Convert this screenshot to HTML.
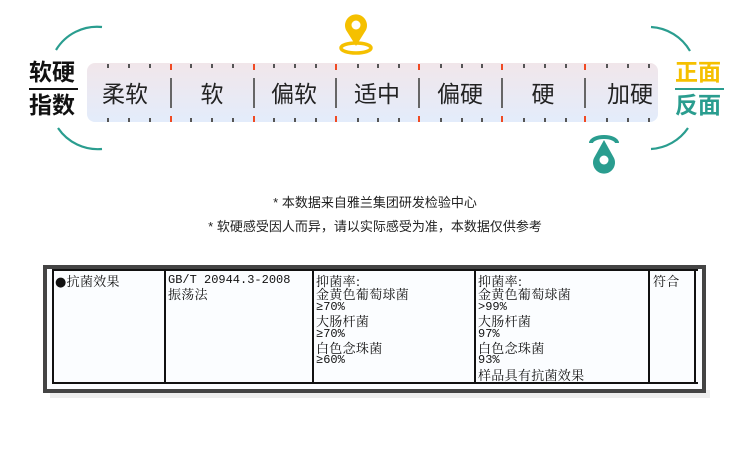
<!DOCTYPE html>
<html><head><meta charset="utf-8"><style>
*{margin:0;padding:0;box-sizing:border-box}
body{width:750px;height:462px;background:#fff;position:relative;overflow:hidden;font-family:"Liberation Sans","Noto Sans CJK SC",sans-serif}
.a{position:absolute}
.bar{left:87px;top:63px;width:571px;height:59px;border-radius:8px;background:linear-gradient(#f1e6ea,#e3ecfb)}
.lab{font-size:23px;color:#222;top:75px;transform:translateX(-50%);white-space:nowrap}
.div{width:2px;height:30px;background:#666;top:78px}
.tk{width:2px;height:4px;background:#555}
.rt{width:2px;height:6px;background:#f04a23}
.t{font-family:"Liberation Mono",monospace;font-size:12px;color:#111;top:274px;white-space:nowrap}
.t div{height:13.4px;line-height:13.4px;overflow:visible}
.t .c{font-family:"Noto Serif CJK SC",serif;font-size:13px;letter-spacing:0.3px}
.vl{width:2px;background:#111;top:269px;height:115px}
</style></head><body>
<svg class="a" style="left:0;top:0" width="750" height="180">
<path d="M56 50 A48 48 0 0 1 102 27" stroke="#2a9d8f" stroke-width="2.2" fill="none"/>
<path d="M58 128 A48 48 0 0 0 102 149" stroke="#2a9d8f" stroke-width="2.2" fill="none"/>
<path d="M651 27 A48 48 0 0 1 690 51" stroke="#2a9d8f" stroke-width="2.2" fill="none"/>
<path d="M688 128 A48 48 0 0 1 651 149" stroke="#2a9d8f" stroke-width="2.2" fill="none"/>
<ellipse cx="356" cy="48" rx="15" ry="5" fill="none" stroke="#f5c000" stroke-width="3.5"/>
<path d="M356 46 L346 30 A11 11 0 1 1 366 30 Z" fill="#f5c000"/>
<circle cx="356" cy="25" r="4.5" fill="#fff"/>
<path d="M591 143 A13 6 0 0 1 617 143" fill="none" stroke="#2a9d8f" stroke-width="4"/>
<path d="M604 140 L594 158 A11 11 0 1 0 614 158 Z" fill="#2a9d8f"/>
<circle cx="604" cy="160" r="4.5" fill="#fff"/>
</svg>
<div class="a" style="left:29px;top:58px;font-size:23px;font-weight:bold;line-height:29px;color:#111">软硬</div>
<div class="a" style="left:29px;top:88px;width:49px;height:2px;background:#111"></div>
<div class="a" style="left:29px;top:91px;font-size:23px;font-weight:bold;line-height:29px;color:#111">指数</div>
<div class="a" style="left:675px;top:58px;font-size:23px;font-weight:bold;line-height:29px;color:#f5c000">正面</div>
<div class="a" style="left:675px;top:88px;width:49px;height:2px;background:#2a9d8f"></div>
<div class="a" style="left:675px;top:91px;font-size:23px;font-weight:bold;line-height:29px;color:#2a9d8f">反面</div>
<div class="a bar"></div>
<div id="ticks"></div>
<div class="a lab" style="left:125px">柔软</div>
<div class="a lab" style="left:212px">软</div>
<div class="a lab" style="left:294px">偏软</div>
<div class="a lab" style="left:377px">适中</div>
<div class="a lab" style="left:460px">偏硬</div>
<div class="a lab" style="left:543px">硬</div>
<div class="a lab" style="left:630px">加硬</div>
<script>
var h='',R=[170,253,335,418,501,584];
R.forEach(function(x){h+='<div class="a div" style="left:'+x+'px"></div><div class="a rt" style="left:'+x+'px;top:64px"></div><div class="a rt" style="left:'+x+'px;top:116px"></div>';});
var x=107;while(x<650){var r=R.some(function(v){return Math.abs(v-x)<8});if(!r){h+='<div class="a tk" style="left:'+x+'px;top:64px"></div><div class="a tk" style="left:'+x+'px;top:118px"></div>';}x+=20.8;}
document.getElementById('ticks').innerHTML=h;
</script>
<div class="a" style="left:0;width:750px;text-align:center;top:192px;font-size:13px;color:#222">* 本数据来自雅兰集团研发检验中心</div>
<div class="a" style="left:0;width:750px;text-align:center;top:216px;font-size:13px;color:#222">* 软硬感受因人而异，请以实际感受为准，本数据仅供参考</div>
<div class="a" style="left:50px;top:390px;width:660px;height:8px;background:#eee"></div>
<div class="a" style="left:43px;top:265px;width:663px;height:128px;border:4px solid #444;background:#fbfdff"></div>
<div class="a" style="left:53px;top:269px;width:645px;height:2px;background:#111"></div>
<div class="a" style="left:53px;top:382px;width:645px;height:2px;background:#111"></div>
<div class="a vl" style="left:52px"></div>
<div class="a vl" style="left:164px"></div>
<div class="a vl" style="left:312px"></div>
<div class="a vl" style="left:474px"></div>
<div class="a vl" style="left:648px"></div>
<div class="a vl" style="left:694px"></div>
<div class="a t" style="left:55px"><div class="c"><span style="font-family:'DejaVu Sans'">●</span>抗菌效果</div></div>
<div class="a t" style="left:168px"><div>GB/T 20944.3-2008</div><div class="c">振荡法</div></div>
<div class="a t" style="left:316px"><div class="c">抑菌率:</div><div class="c">金黄色葡萄球菌</div><div>≥70%</div><div class="c">大肠杆菌</div><div>≥70%</div><div class="c">白色念珠菌</div><div>≥60%</div></div>
<div class="a t" style="left:478px"><div class="c">抑菌率:</div><div class="c">金黄色葡萄球菌</div><div>&gt;99%</div><div class="c">大肠杆菌</div><div>97%</div><div class="c">白色念珠菌</div><div>93%</div><div class="c">样品具有抗菌效果</div></div>
<div class="a t" style="left:653px"><div class="c">符合</div></div>
</body></html>
